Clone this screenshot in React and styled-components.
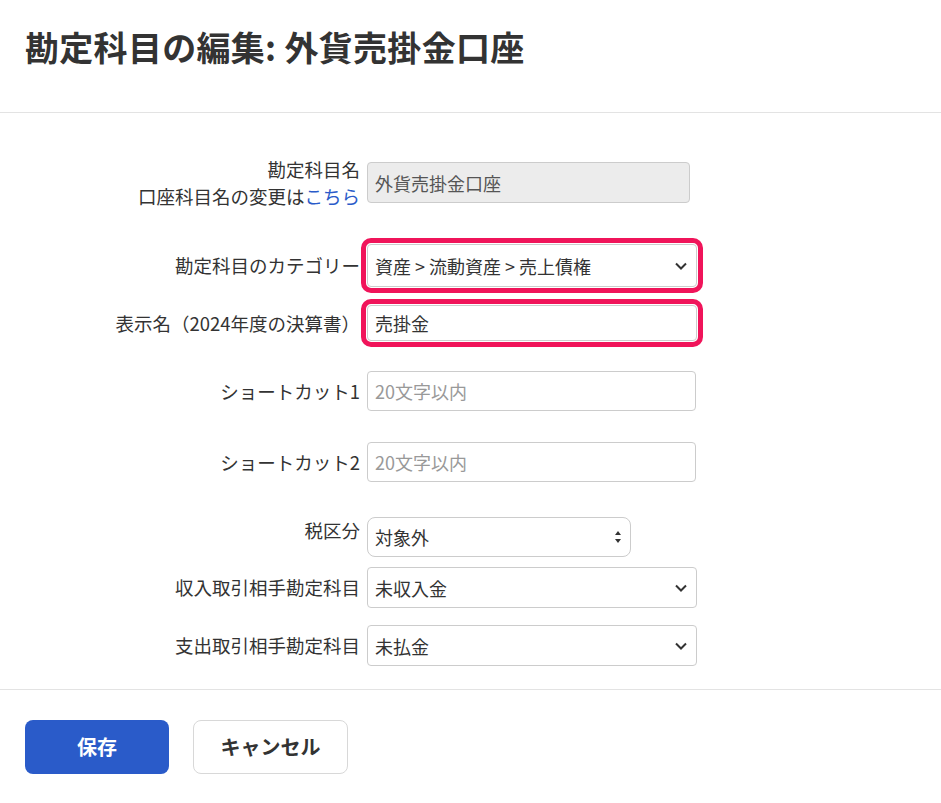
import React from "react";
import styled, { createGlobalStyle } from "styled-components";

const G = createGlobalStyle`
  html,body{margin:0;padding:0;background:#fff;}
  body{font-family:"Noto Sans CJK JP","Liberation Sans",sans-serif;color:#333;}
  *{box-sizing:border-box;}
`;
const Page = styled.div`width:941px;height:803px;display:flex;flex-direction:column;overflow:hidden;`;
const Header = styled.div`height:113px;border-bottom:1px solid #e3e3e3;padding:22px 0 0 25px;`;
const Title = styled.h1`margin:0;font-size:34px;font-weight:700;color:#333;letter-spacing:0.3px;`;
const Body = styled.div`
  height:577px;overflow-y:scroll;border-bottom:1px solid #e3e3e3;
  &::-webkit-scrollbar{width:17px;}
  &::-webkit-scrollbar-track{background:#f1f1f1;}
  &::-webkit-scrollbar-thumb{background:#c1c1c1;border:2px solid #f1f1f1;border-top-width:24px;}
`;
const Content = styled.div`padding-top:49px;height:1250px;`;
const Row = styled.div`display:flex;align-items:${p=>p.$top?"flex-start":"center"};height:${p=>p.$h||40}px;margin-top:${p=>p.$mt||0}px;`;
const Label = styled.div`width:360px;flex:none;text-align:right;font-size:18.5px;line-height:27px;color:#333;padding-top:${p=>p.$pt||0}px;`;
const Link = styled.a`color:#2a5bc9;text-decoration:none;`;
const Ctrl = styled.div`
  margin-left:7px;width:${p=>p.$w||329}px;height:100%;border:1px solid #ccc;border-radius:${p=>p.$r||4}px;
  background:${p=>p.$gray?"#ececec":"#fff"};display:flex;align-items:center;justify-content:space-between;
  padding:0 8px 0 7px;font-size:18px;color:${p=>p.$ph?"#999":p.$gray?"#555":"#333"};
  ${p=>p.$hl?"outline:5px solid #f0145a;outline-offset:1px;":""}
`;
const Footer = styled.div`flex:1;display:flex;align-items:center;gap:24px;padding:0 0 0 25px;`;
const Btn = styled.button`
  height:54px;border-radius:8px;font-size:20px;font-weight:700;font-family:inherit;
  width:${p=>p.$w}px;background:${p=>p.$primary?"#2a5bc9":"#fff"};color:${p=>p.$primary?"#fff":"#333"};
  border:${p=>p.$primary?"none":"1px solid #d8d8d8"};
`;
const Chev = () => (<svg width="14" height="10" viewBox="0 0 14 10"><path d="M2 2.5l5 5 5-5" fill="none" stroke="#333" strokeWidth="2"/></svg>);
const Spin = () => (<svg width="8" height="14" viewBox="0 0 8 14"><path d="M4 1L7 5H1z M4 13L1 9h6z" fill="#333"/></svg>);

export default function App(){
  return (<Page><G/>
    <Header><Title>勘定科目の編集: 外貨売掛金口座</Title></Header>
    <Body><Content>
      <Row $h={41}><Label>勘定科目名<br/>口座科目名の変更は<Link>こちら</Link></Label><Ctrl $gray $w={323}>外貨売掛金口座</Ctrl></Row>
      <Row $mt={41} $h={43}><Label>勘定科目のカテゴリー</Label><Ctrl $hl $w={330}>資産 &gt; 流動資産 &gt; 売上債権<Chev/></Ctrl></Row>
      <Row $mt={18} $h={36}><Label>表示名（2024年度の決算書）</Label><Ctrl $hl $w={330}>売掛金</Ctrl></Row>
      <Row $mt={30}><Label>ショートカット1</Label><Ctrl $ph>20文字以内</Ctrl></Row>
      <Row $mt={31}><Label>ショートカット2</Label><Ctrl $ph>20文字以内</Ctrl></Row>
      <Row $mt={35} $top><Label>税区分</Label><Ctrl $w={264} $r={8}>対象外<Spin/></Ctrl></Row>
      <Row $mt={10} $h={41}><Label>収入取引相手勘定科目</Label><Ctrl $w={330}>未収入金<Chev/></Ctrl></Row>
      <Row $mt={17} $h={41}><Label>支出取引相手勘定科目</Label><Ctrl $w={330}>未払金<Chev/></Ctrl></Row>
      <Row $mt={30} $h={41}><Label>取引先の指定</Label><Ctrl $w={330}>指定しない<Chev/></Ctrl></Row>
    </Content></Body>
    <Footer><Btn $primary $w={144}>保存</Btn><Btn $w={155}>キャンセル</Btn></Footer>
  </Page>);
}
